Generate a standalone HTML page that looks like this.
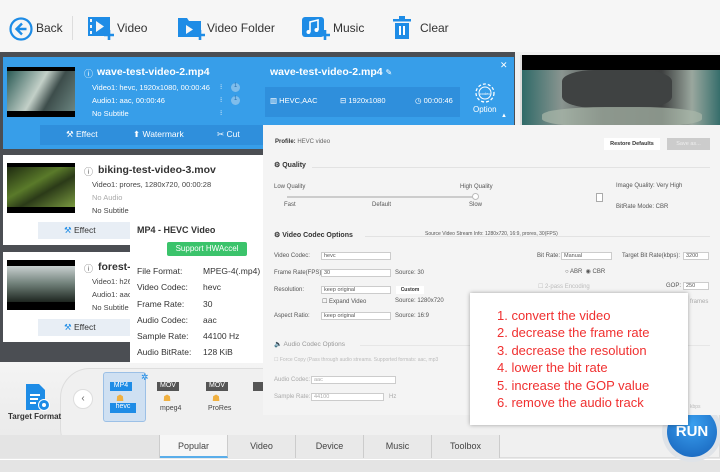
<!DOCTYPE html>
<html><head><meta charset="utf-8"><style>
*{margin:0;padding:0;box-sizing:border-box}
body{width:720px;height:472px;overflow:hidden;position:relative;font-family:"Liberation Sans",sans-serif;background:#f3f3f3}
.a{position:absolute;white-space:nowrap}
.tb{font-size:12px;color:#333}
.w{color:#fff}
.s{font-size:6px;color:#555}
.sel{position:absolute;height:8px;border:1px solid #ccc;background:#fff;font-size:5.5px;color:#555;padding-left:2px;line-height:7px}
.ef{font-size:8.5px;color:#333}
.tab{position:absolute;top:435px;height:23px;width:68px;text-align:center;font-size:9px;color:#444;line-height:23px;border-right:1px solid #ccc;background:#e9e9e9}
.fmt{position:absolute;top:372px;width:36px;height:42px}
.red{font-family:"Liberation Sans",sans-serif;font-size:13px;color:#f03030;position:absolute;left:27px}
</style></head><body>
<div class="a" style="left:0;top:0;width:720px;height:52px;background:#f6f6f6"></div>
<svg class="a" style="left:9px;top:17px" width="24" height="24" viewBox="0 0 24 24"><circle cx="12" cy="12" r="10.5" fill="none" stroke="#1e8ce6" stroke-width="2.2"/><path d="M13 6.5 7.5 12 13 17.5M7.5 12H17.5" fill="none" stroke="#1e8ce6" stroke-width="2.4"/></svg>
<div class="a tb" style="left:36px;top:21px">Back</div>
<div class="a" style="left:72px;top:16px;width:1px;height:24px;background:#ddd"></div>
<svg class="a" style="left:87px;top:15px" width="28" height="26"><rect x="1" y="2" width="22" height="19" fill="#1e8ce6"/><rect x="3" y="4" width="2" height="3" fill="#f6f6f6"/><rect x="3" y="10" width="2" height="3" fill="#f6f6f6"/><rect x="3" y="16" width="2" height="3" fill="#f6f6f6"/><path d="M9 6l8 5.5-8 5.5z" fill="#f6f6f6"/><path d="M22 15v10M17 20h10" stroke="#1e8ce6" stroke-width="2.6"/></svg>
<div class="a tb" style="left:117px;top:21px">Video</div>
<svg class="a" style="left:177px;top:15px" width="30" height="26"><path d="M1 3h9l2 3h12v16H1z" fill="#1e8ce6"/><path d="M9 10l7 4.5-7 4.5z" fill="#f6f6f6"/><path d="M23 15v10M18 20h10" stroke="#1e8ce6" stroke-width="2.6"/></svg>
<div class="a tb" style="left:207px;top:21px">Video Folder</div>
<svg class="a" style="left:301px;top:15px" width="30" height="26"><rect x="1" y="2" width="22" height="20" rx="3" fill="#1e8ce6"/><path d="M9 17V7l8-2v10" fill="none" stroke="#fff" stroke-width="1.6"/><circle cx="7.5" cy="17" r="2" fill="#fff"/><circle cx="15.5" cy="15" r="2" fill="#fff"/><path d="M24 15v10M19 20h10" stroke="#1e8ce6" stroke-width="2.6"/></svg>
<div class="a tb" style="left:333px;top:21px">Music</div>
<svg class="a" style="left:393px;top:16px" width="18" height="24"><rect x="0" y="3" width="18" height="2.5" fill="#1e8ce6"/><rect x="6" y="0" width="6" height="3" fill="#1e8ce6"/><rect x="2" y="7" width="14" height="16" fill="#1e8ce6"/><rect x="6" y="10" width="2" height="9" fill="#fff"/><rect x="10" y="10" width="2" height="9" fill="#fff"/></svg>
<div class="a tb" style="left:420px;top:21px">Clear</div>
<div class="a" style="left:0;top:52px;width:520px;height:315px;background:#4b4e53"></div>
<div class="a" style="left:515px;top:52px;width:205px;height:80px;background:#f0f0f0"></div>
<div class="a" style="left:520px;top:55px;width:200px;height:72px;background:#3d4a4a;overflow:hidden;border-left:2px solid #ddd">
<div class="a" style="left:0;top:0;width:200px;height:15px;background:#000"></div>
<div class="a" style="left:0;top:15px;width:200px;height:57px;background:linear-gradient(90deg,#2f6a68,#8a9590 20%,#4a4c4c 40%,#3e4040 70%,#9aa79e 85%,#2f6a68)"></div>
<div class="a" style="left:40px;top:15px;width:110px;height:38px;background:#3f4242;border-radius:30%"></div>
<div class="a" style="left:20px;top:52px;width:160px;height:20px;background:#a9b8aa;opacity:.7;border-radius:40%"></div>
</div>
<div class="a" style="left:3px;top:57px;width:511px;height:92px;background:#379ee9"></div>
<div class="a" style="left:7px;top:67px;width:68px;height:50px;background:#000"><div style="position:absolute;left:0;top:4px;width:68px;height:40px;background:linear-gradient(120deg,#2a5a55,#c3d0c8 45%,#3d4d4b 65%,#6b8580)"></div></div>
<div class="a w" style="left:84px;top:67px;font-size:9px">ⓘ</div>
<div class="a w" style="left:97px;top:66px;font-size:10.5px;font-weight:bold">wave-test-video-2.mp4</div>
<div class="a w" style="left:92px;top:83px;font-size:7.5px">Video1: hevc, 1920x1080, 00:00:46</div>
<div class="a w" style="left:92px;top:96px;font-size:7.5px">Audio1: aac, 00:00:46</div>
<div class="a w" style="left:92px;top:109px;font-size:7.5px">No Subtitle</div>
<div class="a w" style="left:220px;top:83px;font-size:7px">⁝</div><div class="a w" style="left:220px;top:96px;font-size:7px">⁝</div><div class="a w" style="left:220px;top:109px;font-size:7px">⁝</div>
<div class="a" style="left:231px;top:83px;width:9px;height:9px;border-radius:50%;background:#7fbdeb;font-size:6px;text-align:center;color:#2870b0">1</div>
<div class="a" style="left:231px;top:96px;width:9px;height:9px;border-radius:50%;background:#7fbdeb;font-size:6px;text-align:center;color:#2870b0">1</div>
<div class="a w" style="left:270px;top:66px;font-size:10.5px;font-weight:bold">wave-test-video-2.mp4 <span style="font-weight:normal;font-size:8px">✎</span></div>
<div class="a" style="left:265px;top:87px;width:195px;height:30px;background:#2f8fdc"></div>
<div class="a w" style="left:270px;top:96px;font-size:7.5px">▥ HEVC,AAC</div>
<div class="a w" style="left:340px;top:96px;font-size:7.5px">⊟ 1920x1080</div>
<div class="a w" style="left:415px;top:96px;font-size:7.5px">◷ 00:00:46</div>
<svg class="a" style="left:472px;top:80px" width="26" height="26"><circle cx="13" cy="13" r="9" fill="none" stroke="#fff" stroke-width="1.3" stroke-dasharray="3 2"/><circle cx="13" cy="13" r="6" fill="none" stroke="#fff" stroke-width="1"/><text x="13" y="15" font-size="4" fill="#fff" text-anchor="middle" font-family="Liberation Sans">codec</text></svg>
<div class="a w" style="left:473px;top:105px;font-size:8px">Option</div>
<div class="a w" style="left:500px;top:60px;font-size:9px">✕</div>
<div class="a w" style="left:501px;top:113px;font-size:6px">▲</div>
<div class="a" style="left:40px;top:125px;width:225px;height:20px;background:#2f8fdc"></div>
<div class="a w" style="left:66px;top:129px;font-size:8.5px">⚒ Effect</div>
<div class="a w" style="left:133px;top:129px;font-size:8.5px">⬆ Watermark</div>
<div class="a w" style="left:217px;top:129px;font-size:8.5px">✂ Cut</div>
<div class="a" style="left:3px;top:155px;width:262px;height:90px;background:#fff"></div>
<div class="a" style="left:7px;top:163px;width:68px;height:50px;background:#000"><div style="position:absolute;left:0;top:4px;width:68px;height:40px;background:linear-gradient(150deg,#1e2a10,#5a7a2a 40%,#2b3a18 60%,#7a9a40)"></div></div>
<div class="a" style="left:84px;top:165px;font-size:9px;color:#666">ⓘ</div>
<div class="a" style="left:98px;top:164px;font-size:10.5px;font-weight:bold;color:#333">biking-test-video-3.mov</div>
<div class="a" style="left:92px;top:180px;font-size:7.5px;color:#444">Video1: prores, 1280x720, 00:00:28</div>
<div class="a" style="left:92px;top:193px;font-size:7.5px;color:#aaa">No Audio</div>
<div class="a" style="left:92px;top:206px;font-size:7.5px;color:#444">No Subtitle</div>
<div class="a" style="left:38px;top:222px;width:96px;height:17px;background:#e8eef5"></div>
<div class="a ef" style="left:64px;top:225px"><span style="color:#1e8ce6">⚒</span> Effect</div>
<div class="a" style="left:3px;top:252px;width:262px;height:90px;background:#fff"></div>
<div class="a" style="left:7px;top:260px;width:68px;height:50px;background:#000"><div style="position:absolute;left:0;top:6px;width:68px;height:36px;background:linear-gradient(180deg,#c8d0d0,#6f7f78 50%,#1e2620)"></div></div>
<div class="a" style="left:84px;top:262px;font-size:9px;color:#666">ⓘ</div>
<div class="a" style="left:98px;top:261px;font-size:10.5px;font-weight:bold;color:#333">forest-</div>
<div class="a" style="left:92px;top:277px;font-size:7.5px;color:#444">Video1: h26</div>
<div class="a" style="left:92px;top:290px;font-size:7.5px;color:#444">Audio1: aac</div>
<div class="a" style="left:92px;top:303px;font-size:7.5px;color:#444">No Subtitle</div>
<div class="a" style="left:38px;top:319px;width:96px;height:17px;background:#e8eef5"></div>
<div class="a ef" style="left:64px;top:322px"><span style="color:#1e8ce6">⚒</span> Effect</div>
<div class="a" style="left:0;top:362px;width:720px;height:110px;background:linear-gradient(#f4f4f4,#e6e6e6)"></div>
<div class="a" style="left:60px;top:368px;width:660px;height:90px;border-radius:30px 0 0 30px;background:#f0f0f0;border:1px solid #ddd"></div>
<div class="a" style="left:0;top:459px;width:720px;height:13px;background:#e4e4e4;border-top:1px solid #fff"></div>
<svg class="a" style="left:24px;top:383px" width="28" height="30"><path d="M2 1h13l6 6v20H2z" fill="#1e8ce6"/><rect x="6" y="11" width="10" height="2" fill="#fff"/><rect x="6" y="15" width="8" height="2" fill="#fff"/><rect x="6" y="19" width="6" height="2" fill="#fff"/><circle cx="20" cy="22" r="5.5" fill="#1e8ce6" stroke="#fff" stroke-width="1"/><circle cx="20" cy="22" r="2" fill="#fff"/></svg>
<div class="a" style="left:8px;top:412px;font-size:8px;font-weight:bold;color:#333">Target Format</div>
<div class="a" style="left:73px;top:389px;width:20px;height:20px;border-radius:50%;background:#fff;border:1px solid #ddd;font-size:10px;color:#666;text-align:center;line-height:18px">‹</div>
<div class="a" style="left:103px;top:372px;width:43px;height:50px;background:#cfe0f2;border:1px solid #9cc0e6;border-radius:3px"></div>
<div class="a" style="left:141px;top:372px;font-size:9px;color:#1e8ce6">✲</div>
<div class="fmt" style="left:108px"><div class="a" style="left:2px;top:10px;width:22px;height:9px;background:#1e8ce6;color:#fff;font-size:7px;text-align:center">MP4</div><div class="a" style="left:8px;top:21px;color:#f0b040;font-size:9px">☗</div><div class="a" style="left:2px;top:31px;width:26px;height:10px;background:#1e8ce6;color:#fff;font-size:7px;text-align:center">hevc</div></div>
<div class="fmt" style="left:155px"><div class="a" style="left:2px;top:10px;width:22px;height:9px;background:#555;color:#fff;font-size:7px;text-align:center">MOV</div><div class="a" style="left:8px;top:21px;color:#f0b040;font-size:9px">☗</div><div class="a" style="left:5px;top:33px;font-size:7px;color:#444">mpeg4</div></div>
<div class="fmt" style="left:204px"><div class="a" style="left:2px;top:10px;width:22px;height:9px;background:#555;color:#fff;font-size:7px;text-align:center">MOV</div><div class="a" style="left:8px;top:21px;color:#f0b040;font-size:9px">☗</div><div class="a" style="left:4px;top:33px;font-size:7px;color:#444">ProRes</div></div>
<div class="a" style="left:253px;top:382px;width:12px;height:9px;background:#555"></div>
<div class="tab" style="left:0;width:160px;background:#e4e4e4"></div>
<div class="tab" style="left:160px;background:#f6f6f6;border-bottom:2px solid #5aaeea">Popular</div>
<div class="tab" style="left:228px">Video</div>
<div class="tab" style="left:296px">Device</div>
<div class="tab" style="left:364px">Music</div>
<div class="tab" style="left:432px">Toolbox</div>
<div class="a" style="left:662px;top:402px;width:60px;height:60px;border-radius:50%;background:#dfe3e8"></div>
<div class="a" style="left:667px;top:407px;width:50px;height:50px;border-radius:50%;background:radial-gradient(circle at 50% 35%,#3aa0f0,#1560b8);color:#fff;font-weight:bold;font-size:15px;text-align:center;line-height:50px">RUN</div>
<div class="a" style="left:130px;top:218px;width:135px;height:145px;background:#fff"></div>
<div class="a" style="left:137px;top:225px;font-size:9px;font-weight:bold;color:#333">MP4 - HEVC Video</div>
<div class="a" style="left:167px;top:242px;width:80px;height:14px;background:#3bc36b;border-radius:2px;color:#fff;font-size:8px;text-align:center;line-height:14px">Support HWAccel</div>
<div class="a" style="left:137px;top:263px;font-size:8.5px;color:#333;line-height:16.3px">File Format:<br>Video Codec:<br>Frame Rate:<br>Audio Codec:<br>Sample Rate:<br>Audio BitRate:</div>
<div class="a" style="left:203px;top:263px;font-size:8.5px;color:#333;line-height:16.3px">MPEG-4(.mp4)<br>hevc<br>30<br>aac<br>44100 Hz<br>128 KiB</div>
<div class="a" style="left:263px;top:125px;width:457px;height:290px;background:#f4f4f4"></div>
<div class="a" style="left:275px;top:139px;font-size:6px;color:#333"><b>Profile:</b> <span style="color:#666">HEVC video</span></div>
<div class="a" style="left:604px;top:138px;width:56px;height:12px;background:#fff;font-size:5.5px;font-weight:bold;color:#333;text-align:center;line-height:12px">Restore Defaults</div>
<div class="a" style="left:667px;top:138px;width:43px;height:12px;background:#ccc;font-size:5.5px;color:#eee;text-align:center;line-height:12px">Save as...</div>
<div class="a" style="left:274px;top:161px;font-size:7px;font-weight:bold;color:#333">⚙ Quality</div>
<div class="a" style="left:312px;top:167px;width:398px;height:1px;background:#e2e2e2"></div>
<div class="a s" style="left:274px;top:184px">Low Quality</div>
<div class="a s" style="left:460px;top:184px">High Quality</div>
<div class="a" style="left:287px;top:196px;width:188px;height:2px;background:#ccc"></div>
<div class="a" style="left:472px;top:193px;width:7px;height:7px;border-radius:50%;background:#fff;border:1px solid #bbb"></div>
<div class="a s" style="left:284px;top:202px">Fast</div>
<div class="a s" style="left:372px;top:202px">Default</div>
<div class="a s" style="left:469px;top:202px">Slow</div>
<div class="a" style="left:596px;top:193px;width:7px;height:9px;border:1px solid #aaa;background:#fff"></div>
<div class="a s" style="left:616px;top:183px">Image Quality: Very High</div>
<div class="a s" style="left:616px;top:204px">BitRate Mode: CBR</div>
<div class="a" style="left:274px;top:231px;font-size:7px;font-weight:bold;color:#333">⚙ Video Codec Options</div>
<div class="a" style="left:365px;top:236px;width:345px;height:1px;background:#e2e2e2"></div>
<div class="a" style="left:425px;top:231px;font-size:5px;color:#555">Source Video Stream Info: 1280x720, 16:9, prores, 30(FPS)</div>
<div class="a s" style="left:274px;top:253px">Video Codec:</div><div class="sel" style="left:321px;top:252px;width:70px">hevc</div>
<div class="a s" style="left:274px;top:270px">Frame Rate(FPS):</div><div class="sel" style="left:321px;top:269px;width:70px">30</div><div class="a s" style="left:395px;top:270px">Source: 30</div>
<div class="a s" style="left:274px;top:287px">Resolution:</div><div class="sel" style="left:321px;top:286px;width:70px">keep original</div>
<div class="a" style="left:396px;top:286px;width:28px;height:8px;background:#fff;font-size:5px;font-weight:bold;text-align:center;line-height:8px;color:#333">Custom</div>
<div class="a s" style="left:322px;top:298px">☐ Expand Video</div><div class="a s" style="left:395px;top:298px">Source: 1280x720</div>
<div class="a s" style="left:274px;top:313px">Aspect Ratio:</div><div class="sel" style="left:321px;top:312px;width:70px">keep original</div><div class="a s" style="left:395px;top:313px">Source: 16:9</div>
<div class="a s" style="left:537px;top:253px">Bit Rate:</div><div class="sel" style="left:561px;top:252px;width:51px">Manual</div>
<div class="a s" style="left:622px;top:253px">Target Bit Rate(kbps):</div><div class="sel" style="left:683px;top:252px;width:26px">3200</div>
<div class="a s" style="left:565px;top:268px">○ ABR &nbsp;◉ CBR</div>
<div class="a s" style="left:538px;top:283px;color:#bbb">☐ 2-pass Encoding</div>
<div class="a s" style="left:666px;top:283px">GOP:</div><div class="sel" style="left:683px;top:282px;width:26px">250</div>
<div class="a s" style="left:690px;top:299px;color:#aaa">frames</div>
<div class="a" style="left:274px;top:340px;font-size:6.5px;color:#999">🔈 Audio Codec Options</div>
<div class="a" style="left:360px;top:345px;width:350px;height:1px;background:#e6e6e6"></div>
<div class="a" style="left:274px;top:357px;font-size:5px;color:#bbb">☐ Force Copy (Pass through audio streams. Supported formats: aac, mp3</div>
<div class="a s" style="left:274px;top:377px;color:#aaa">Audio Codec:</div><div class="sel" style="left:311px;top:376px;width:85px;color:#aaa">aac</div>
<div class="a s" style="left:274px;top:394px;color:#aaa">Sample Rate:</div><div class="sel" style="left:311px;top:393px;width:73px;color:#aaa">44100</div><div class="a s" style="left:389px;top:394px;color:#aaa">Hz</div>
<div class="a" style="left:690px;top:404px;font-size:5px;color:#bbb">kbps</div>
<div class="a" style="left:470px;top:293px;width:218px;height:132px;background:#fff;box-shadow:0 0 4px rgba(0,0,0,.35)">
<div class="red" style="top:15px">1. convert the video</div>
<div class="red" style="top:32px">2. decrease the frame rate</div>
<div class="red" style="top:50px">3. decrease the resolution</div>
<div class="red" style="top:67px">4. lower the bit rate</div>
<div class="red" style="top:85px">5. increase the GOP value</div>
<div class="red" style="top:102px">6. remove the audio track</div>
</div>
</body></html>
